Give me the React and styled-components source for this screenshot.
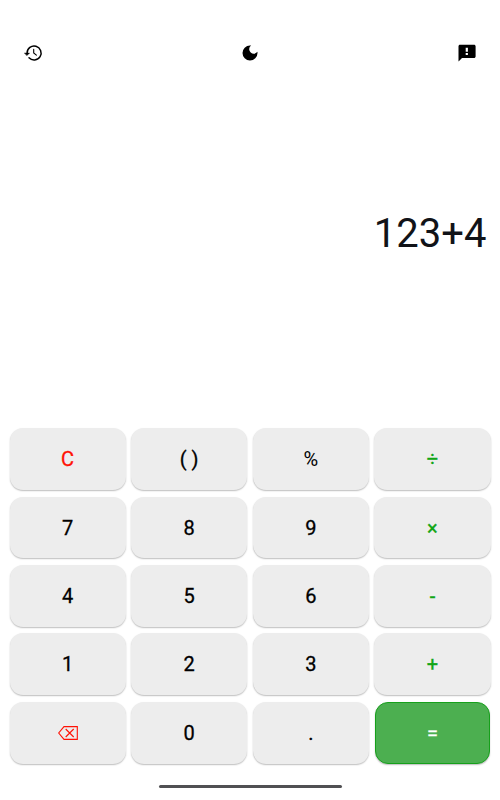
import React, { useState } from "react";
import styled, { createGlobalStyle } from "styled-components";
import { MdDarkMode } from "react-icons/md";

const GlobalStyle = createGlobalStyle`
  * {
    box-sizing: border-box;
  }
  body {
    margin: 0;
    background: #fff;
    font-family: Roboto, "Liberation Sans", sans-serif;
  }
`;

const Container = styled.div`
  display: flex;
  flex-direction: column;
  width: 500px;
  height: 800px;
  overflow: hidden;
  background: #fff;
`;

const Toolbar = styled.header`
  display: flex;
  justify-content: space-between;
  align-items: center;
  height: 20px;
  margin: 43.3px 23.5px 0 23px;
`;

const IconButton = styled.button`
  display: flex;
  padding: 0;
  border: none;
  background: none;
  color: #000;
  font-size: 20px;
  cursor: pointer;
`;

const Display = styled.div`
  display: flex;
  flex: 1;
  justify-content: flex-end;
  padding: 146.7px 13.6px 0 0;
  color: #111318;
  font-size: 40px;
  line-height: 48px;
`;

const Keypad = styled.div`
  display: grid;
  grid-template-columns: repeat(4, 1fr);
  grid-auto-rows: 61.8px;
  gap: 6.6px 5.5px;
  padding: 0 9.5px;
`;

const Key = styled.button`
  display: flex;
  justify-content: center;
  align-items: center;
  padding: 0;
  border: none;
  border-radius: 13px;
  background: #ededed;
  box-shadow: 0 1px 1.5px rgba(0, 0, 0, 0.26);
  color: ${props => props.$color || "#000"};
  font-family: inherit;
  font-size: 20px;
  font-weight: 400;
  line-height: 24px;
  -webkit-text-stroke: ${props => (props.$thin ? "0" : "0.3px")};
  cursor: pointer;
`;

const EqualKey = styled(Key)`
  margin: 0 0.5px;
  border: 1px solid #16a01b;
  background: #4caf50;
  color: #fff;
`;

const HomeBar = styled.div`
  align-self: center;
  flex-shrink: 0;
  width: 183px;
  height: 3px;
  margin: 21.4px 0 12px;
  border-radius: 2px;
  background: #505053;
`;

const HistoryIcon = () => (
  <svg width="20" height="20" viewBox="0 0 20 20" fill="none" stroke="currentColor" strokeLinecap="round">
    <path d="M4.1 10A7 7 0 1 1 6 14.8" strokeWidth="1.5" />
    <path d="M1.6 10h5L4 12.6z" fill="currentColor" strokeWidth=".4" strokeLinejoin="round" />
    <path d="M10.7 6.4V10l2.7 2.1" strokeWidth="1.1" />
  </svg>
);

const FeedbackIcon = () => (
  <svg width="20" height="20" viewBox="0 0 20 20">
    <path
      fill="currentColor"
      fillRule="evenodd"
      d="M3 1.8h14c.9 0 1.6.6 1.6 1.5v10.2c0 .9-.7 1.5-1.6 1.5H5l-3.5 3.4V3.3c0-.9.6-1.5 1.5-1.5zM8.7 4.7v4h2.2v-4zm0 5.2v2.1h2.2V9.9z"
    />
  </svg>
);

const BackspaceIcon = () => (
  <svg width="20" height="14" viewBox="0 0 20 14" fill="none" stroke="currentColor" strokeWidth="1.1">
    <path d="M6 .6h13.3v12.8H6L.7 7z" />
    <path d="M7.7 3l8 8M15.7 3l-8 8" />
  </svg>
);

const RED = "#ff1205";
const GREEN = "#11a616";

const keys = [
  { label: "C", color: RED },
  { label: "( )" },
  { label: "%", thin: true },
  { label: "÷", color: GREEN },
  { label: "7" },
  { label: "8" },
  { label: "9" },
  { label: "×", color: GREEN },
  { label: "4" },
  { label: "5" },
  { label: "6" },
  { label: "-", color: GREEN },
  { label: "1" },
  { label: "2" },
  { label: "3" },
  { label: "+", color: GREEN },
  { label: "back", color: RED },
  { label: "0" },
  { label: "." },
];

const App = () => {
  const [expression, setExpression] = useState("123+4");

  const handleKey = label => {
    if (label === "C") {
      setExpression("");
    } else if (label === "back") {
      setExpression(expression.slice(0, -1));
    } else if (label === "( )") {
      const open = expression.split("(").length > expression.split(")").length;
      setExpression(expression + (open ? ")" : "("));
    } else {
      setExpression(expression + label);
    }
  };

  return (
    <Container>
      <GlobalStyle />
      <Toolbar>
        <IconButton aria-label="History">
          <HistoryIcon />
        </IconButton>
        <IconButton aria-label="Dark mode">
          <MdDarkMode />
        </IconButton>
        <IconButton aria-label="Feedback">
          <FeedbackIcon />
        </IconButton>
      </Toolbar>
      <Display>{expression}</Display>
      <Keypad>
        {keys.map(key => (
          <Key
            key={key.label}
            $color={key.color}
            $thin={key.thin}
            aria-label={key.label}
            onClick={() => handleKey(key.label)}
          >
            {key.label === "back" ? <BackspaceIcon /> : key.label}
          </Key>
        ))}
        <EqualKey>=</EqualKey>
      </Keypad>
      <HomeBar />
    </Container>
  );
};

export default App;
